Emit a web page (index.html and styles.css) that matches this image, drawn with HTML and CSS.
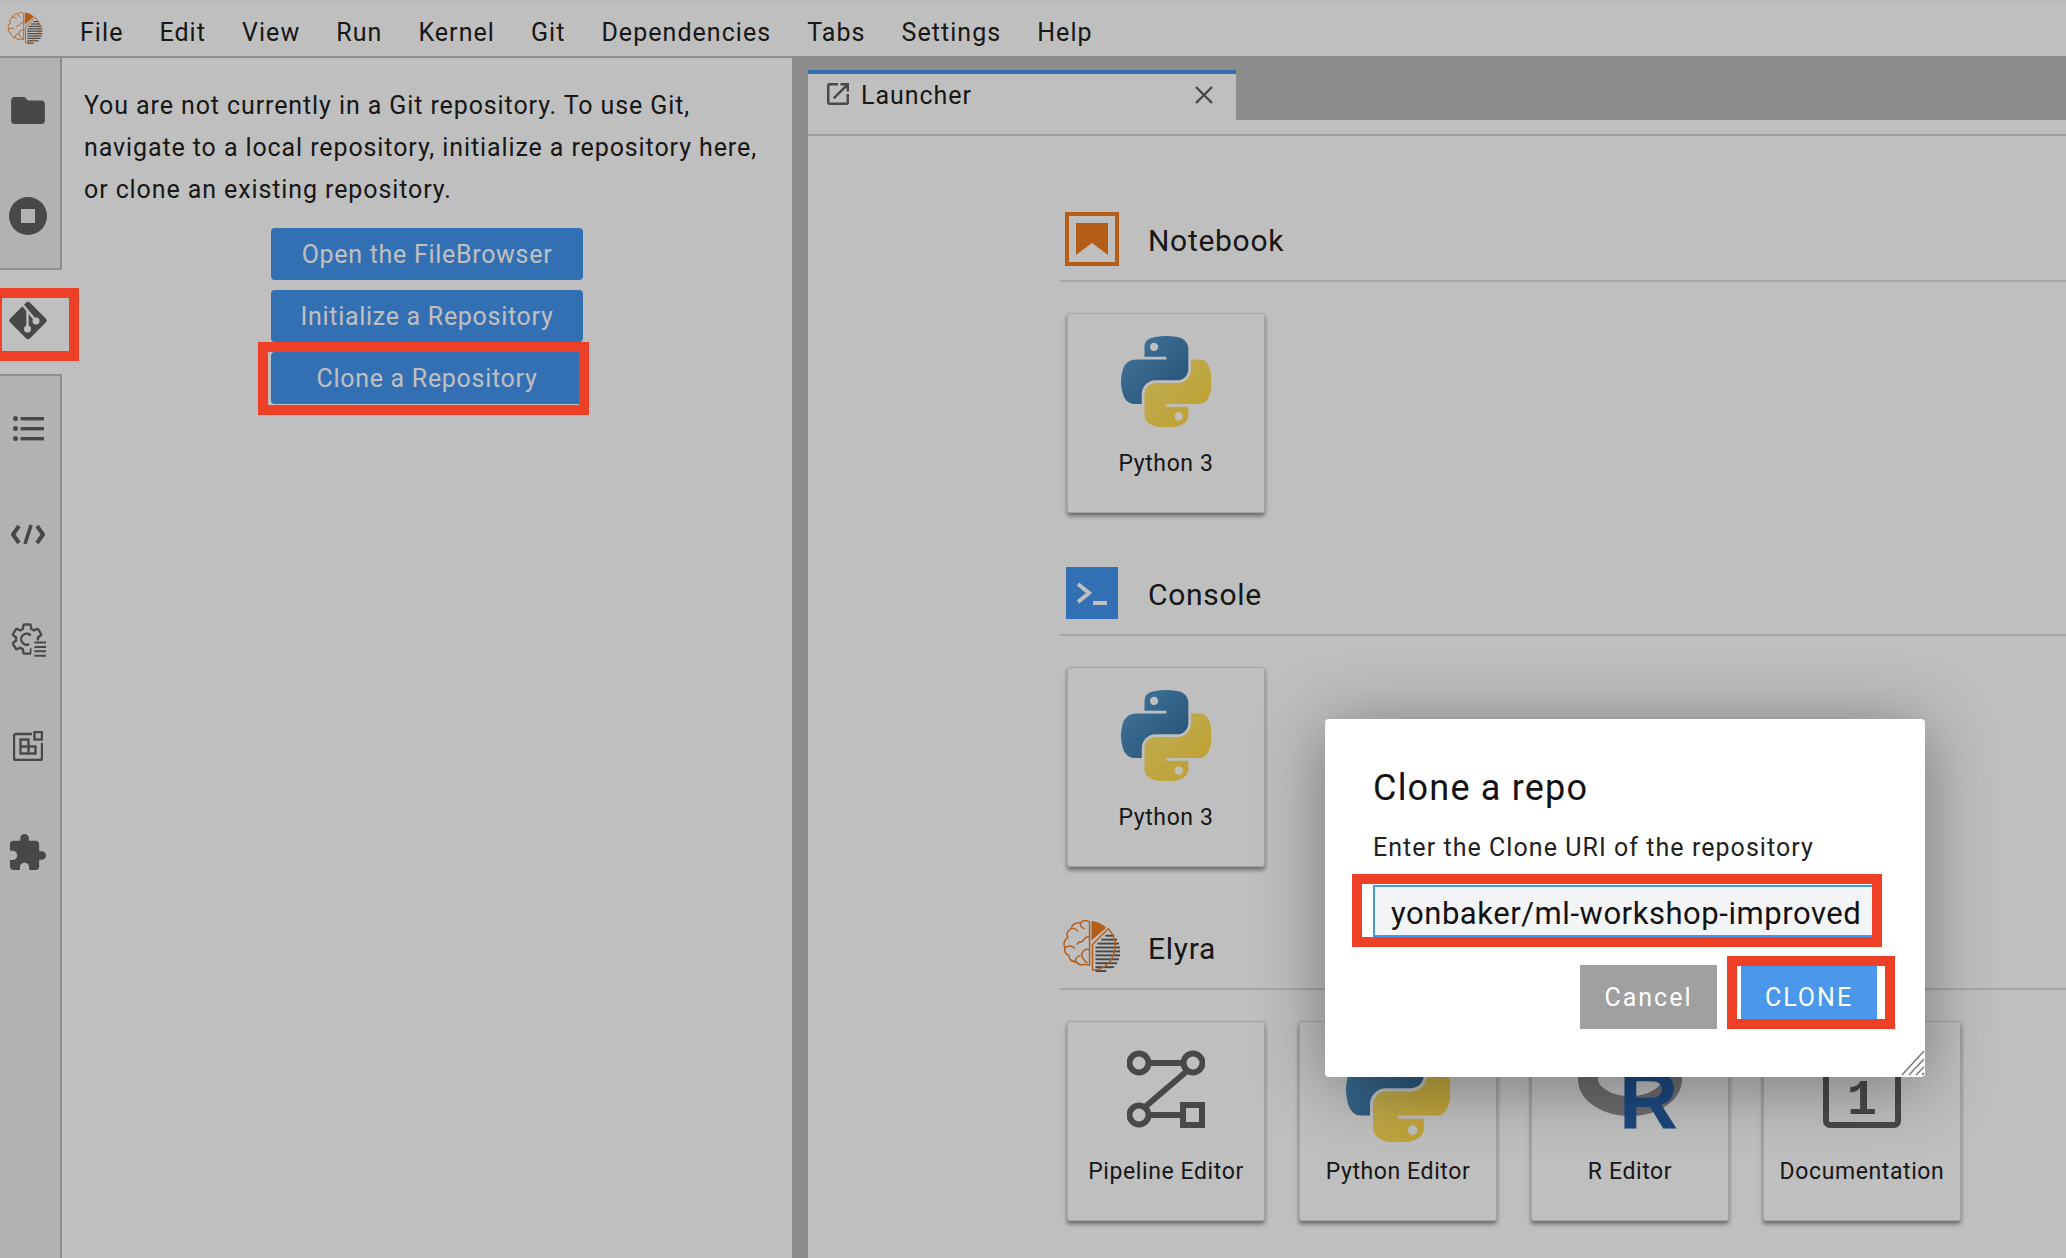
FILE: index.html
```html
<!DOCTYPE html>
<html lang="en">
<head>
  <meta charset="UTF-8">
  <title>JupyterLab - Clone a repo</title>
  <link rel="stylesheet" href="styles.css">
</head>
<body>

<svg class="defs" aria-hidden="true">
  <defs>
    <linearGradient id="pyBlue" x1="0" y1="0" x2="1" y2="1">
      <stop offset="0" stop-color="#5a9fd4"/>
      <stop offset="1" stop-color="#306998"/>
    </linearGradient>
    <linearGradient id="pyYellow" x1="1" y1="1" x2="0" y2="0">
      <stop offset="0" stop-color="#ffd43b"/>
      <stop offset="1" stop-color="#ffe873"/>
    </linearGradient>
    <symbol id="python" viewBox="0 0 110 110">
      <path fill="url(#pyBlue)" d="M54.919 0.001c-4.584.022-8.961.413-12.813 1.095C30.76 3.099 28.7 7.295 28.7 15.032v10.219h26.813v3.406H18.638c-7.793 0-14.616 4.684-16.75 13.594-2.462 10.213-2.571 16.586 0 27.25 1.906 7.938 6.458 13.594 14.25 13.594h9.219v-12.25c0-8.85 7.657-16.656 16.75-16.656h26.781c7.455 0 13.406-6.138 13.406-13.625V15.032c0-7.266-6.13-12.725-13.406-13.937C64.282.328 59.502-.02 54.919.001zM40.419 8.22c2.77 0 5.031 2.299 5.031 5.125 0 2.816-2.262 5.094-5.031 5.094-2.779 0-5.031-2.277-5.031-5.094 0-2.826 2.252-5.125 5.031-5.125z"/>
      <path fill="url(#pyYellow)" d="M85.638 28.657v11.906c0 9.231-7.826 17-16.75 17H42.106c-7.336 0-13.406 6.278-13.406 13.625v25.531c0 7.266 6.319 11.54 13.406 13.625 8.487 2.496 16.626 2.947 26.781 0 6.75-1.954 13.406-5.888 13.406-13.625V86.501H55.513v-3.406h40.188c7.793 0 10.696-5.436 13.406-13.594 2.8-8.399 2.68-16.476 0-27.25-1.926-7.757-5.604-13.594-13.406-13.594H85.638zM70.575 93.313c2.779 0 5.031 2.277 5.031 5.094 0 2.826-2.252 5.125-5.031 5.125-2.77 0-5.031-2.299-5.031-5.125 0-2.816 2.262-5.094 5.031-5.094z"/>
    </symbol>
    <symbol id="elyra" viewBox="0 0 60 55">
      <g fill="#616161">
        <rect x="43" y="15" width="9" height="2"/>
        <rect x="39" y="19" width="16" height="2"/>
        <rect x="35" y="23" width="22" height="2"/>
        <rect x="33" y="27" width="25" height="2"/>
        <rect x="33" y="31" width="25" height="2"/>
        <rect x="33" y="35" width="25" height="2"/>
        <rect x="33" y="39" width="24" height="2"/>
        <rect x="33" y="43" width="22" height="2"/>
        <rect x="33" y="47" width="19" height="2"/>
        <rect x="33" y="51" width="11" height="2"/>
      </g>
      <path fill="#ef7d22" d="M29 1c6 .3 11 3 15 7L29 21z"/>
      <g fill="none" stroke="#ef7d22" stroke-width="1.5" stroke-linejoin="round">
        <path d="M46 9L30 25v26c13 0 23-11 23-25 0-7-3-13-7-17z"/>
        <path d="M27 2c-3-2-7-2-9 1-4-1-9 1-10 6-4 2-5 6-3 9-4 2-5 7-3 10-1 3 0 7 4 8 0 4 3 7 7 6 2 3 6 5 9 3 2 1 3 1 5 1V2z"/>
        <path d="M18 3c-1 3 1 5 4 6M8 9c3-1 6 0 7 3M27 17c-4 0-6 2-7 5M2 28c4-2 8-2 10 1M20 22c-3 0-5 1-6 3M12 44c0-4 2-7 6-8M27 30c-5-1-8 2-8 6M19 36c1 4 3 6 6 8"/>
      </g>
    </symbol>
  </defs>
</svg>

<div class="menu-bar">
  <svg class="menu-logo"><use href="#elyra"/></svg>
  <div class="menu-items">
    <span>File</span>
    <span>Edit</span>
    <span>View</span>
    <span>Run</span>
    <span>Kernel</span>
    <span>Git</span>
    <span>Dependencies</span>
    <span>Tabs</span>
    <span>Settings</span>
    <span>Help</span>
  </div>
</div>

<div class="shell">
  <div class="side-bar">
    <div class="side-group side-group-top">
      <div class="side-tab">
        <svg class="side-icon" viewBox="2 4 20 16" width="34" height="27"><path d="M10 4H4c-1.1 0-1.99.9-1.99 2L2 18c0 1.1.9 2 2 2h16c1.1 0 2-.9 2-2V8c0-1.1-.9-2-2-2h-8l-2-2z"/></svg>
      </div>
      <div class="side-tab">
        <svg class="side-icon" viewBox="0 0 38 38" width="38" height="38"><path fill-rule="evenodd" d="M19 0a19 19 0 100 38 19 19 0 000-38zM12 12h14v14H12z"/></svg>
      </div>
    </div>
    <div class="side-tab side-tab-current">
      <svg viewBox="0 0 40 41" width="40" height="41">
        <rect class="git-body" x="6" y="6.5" width="28" height="28" rx="3" transform="rotate(45 20 20.5)"/>
        <path class="git-line" d="M14 4l14 17M19.500 11v18"/>
        <circle class="git-dot" cx="19.500" cy="29" r="3.500"/>
        <circle class="git-dot" cx="28" cy="21" r="3.500"/>
      </svg>
    </div>
    <div class="side-group side-group-bottom">
      <div class="side-tab">
        <svg class="side-icon" viewBox="0 0 31 25" width="31" height="25">
          <circle cx="2.5" cy="2.5" r="2.5"/><rect x="7.5" y="1" width="23.5" height="3.4"/>
          <circle cx="2.5" cy="12.5" r="2.5"/><rect x="7.5" y="11" width="23.5" height="3.4"/>
          <circle cx="2.5" cy="22.5" r="2.5"/><rect x="7.5" y="21" width="23.5" height="3.4"/>
        </svg>
      </div>
      <div class="side-tab">
        <svg class="side-stroke" viewBox="0 0 34 21" width="34" height="21">
          <path d="M8 2L2 10.5 8 19M26 2l6 8.5L26 19"/>
          <path d="M20 1l-6 19" stroke-width="3.6"/>
        </svg>
      </div>
      <div class="side-tab">
        <svg viewBox="1 1 24 24" width="35" height="35">
          <path class="gear" d="M19.43 12.98c.04-.32.07-.64.07-.98s-.03-.66-.07-.98l2.11-1.65c.19-.15.24-.42.12-.64l-2-3.46c-.12-.22-.39-.3-.61-.22l-2.49 1c-.52-.4-1.08-.73-1.69-.98l-.38-2.65C14.46 2.18 14.25 2 14 2h-4c-.25 0-.46.18-.49.42l-.38 2.65c-.61.25-1.17.59-1.69.98l-2.49-1c-.23-.09-.49 0-.61.22l-2 3.46c-.13.22-.07.49.12.64l2.11 1.65c-.04.32-.07.65-.07.98s.03.66.07.98l-2.11 1.65c-.19.15-.24.42-.12.64l2 3.46c.12.22.39.3.61.22l2.49-1c.52.4 1.08.73 1.69.98l.38 2.65c.03.24.24.42.49.42h4c.25 0 .46-.18.49-.42l.38-2.65c.61-.25 1.17-.59 1.69-.98z"/>
          <path class="gear" d="M14.5 9.5a3.8 3.8 0 10-1 6"/>
          <rect class="gear-gap" x="15" y="13" width="12" height="12"/>
          <path class="gear-list" d="M17 15h8M17 18h8M17 21h8M17 24h8" transform="translate(0 -.6)"/>
        </svg>
      </div>
      <div class="side-tab">
        <svg class="side-stroke side-thin" viewBox="0 0 30 30" width="30" height="30">
          <path d="M19 3H3a2 2 0 00-2 2v22a2 2 0 002 2h24a2 2 0 002-2V12"/>
          <rect x="21.5" y="1" width="7.5" height="7.5"/>
          <path d="M7.5 8.5h8v14h-8zM7.5 15.500h15v7h-7"/>
        </svg>
      </div>
      <div class="side-tab">
        <svg class="side-icon" viewBox="2 1 21 21" width="36" height="36"><path d="M20.5 11H19V7c0-1.1-.9-2-2-2h-4V3.5C13 2.12 11.88 1 10.5 1S8 2.12 8 3.5V5H4c-1.1 0-1.99.9-1.99 2v3.8H3.5c1.49 0 2.7 1.21 2.7 2.7s-1.21 2.7-2.7 2.7H2V20c0 1.1.9 2 2 2h3.8v-1.5c0-1.49 1.21-2.7 2.7-2.7 1.49 0 2.7 1.21 2.7 2.7V22H17c1.1 0 2-.9 2-2v-4h1.5c1.38 0 2.5-1.12 2.5-2.5S21.88 11 20.5 11z"/></svg>
      </div>
    </div>
  </div>

  <div class="git-panel">
    <p class="git-text">You are not currently in a Git repository. To use Git, navigate to a local repository, initialize a repository here, or clone an existing repository.</p>
    <div class="git-actions">
      <button class="git-btn">Open the FileBrowser</button>
      <button class="git-btn">Initialize a Repository</button>
      <button class="git-btn">Clone a Repository</button>
    </div>
  </div>

  <div class="work-area">
    <div class="tab-bar">
      <div class="tab">
        <svg class="tab-icon" viewBox="3 3 18 18" width="22" height="22"><path d="M19 19H5V5h7V3H5a2 2 0 00-2 2v14a2 2 0 002 2h14c1.1 0 2-.9 2-2v-7h-2v7zM14 3v2h3.59l-9.83 9.83 1.41 1.41L19 6.41V10h2V3h-7z"/></svg>
        <span class="tab-label">Launcher</span>
        <svg class="tab-close" viewBox="0 0 18 18" width="18" height="18"><path d="M1 1l16 16M17 1L1 17"/></svg>
      </div>
    </div>
    <div class="tab-strip"></div>

    <div class="launcher">
      <section class="section">
        <div class="section-head">
          <div class="section-icon">
            <svg viewBox="0 0 54 54" width="54" height="54">
              <rect class="nb-frame" x="2" y="2" width="50" height="50"/>
              <path class="nb-mark" d="M11 11h32v32L27 31 11 43z"/>
            </svg>
          </div>
          <h3 class="section-title">Notebook</h3>
        </div>
        <div class="cards">
          <div class="card">
            <div class="card-icon"><svg width="90" height="92"><use href="#python"/></svg></div>
            <div class="card-label">Python 3</div>
          </div>
        </div>
      </section>

      <section class="section">
        <div class="section-head">
          <div class="section-icon">
            <svg class="console-icon" viewBox="0 0 52 52" width="52" height="52">
              <rect class="con-bg" width="52" height="52"/>
              <path class="con-mark" d="M12 17l11 9-11 9M27 36h14"/>
            </svg>
          </div>
          <h3 class="section-title">Console</h3>
        </div>
        <div class="cards">
          <div class="card">
            <div class="card-icon"><svg width="90" height="92"><use href="#python"/></svg></div>
            <div class="card-label">Python 3</div>
          </div>
        </div>
      </section>

      <section class="section">
        <div class="section-head">
          <div class="section-icon"><svg class="elyra-icon"><use href="#elyra"/></svg></div>
          <h3 class="section-title">Elyra</h3>
        </div>
        <div class="cards">
          <div class="card">
            <div class="card-icon">
              <svg class="pipe-icon" viewBox="0 0 78 78" width="78" height="78">
                <circle cx="12" cy="13" r="9.5"/>
                <circle cx="66" cy="13" r="9.5"/>
                <circle cx="12" cy="65" r="9.5"/>
                <rect x="56" y="55" width="19" height="20"/>
                <path d="M21.500 13h35M60 21L18 57M21.500 65H56"/>
              </svg>
            </div>
            <div class="card-label">Pipeline Editor</div>
          </div>
          <div class="card">
            <div class="card-icon"><svg width="104" height="106"><use href="#python"/></svg></div>
            <div class="card-label">Python Editor</div>
          </div>
          <div class="card">
            <div class="card-icon">
              <svg viewBox="0 0 104 80" width="104" height="80">
                <ellipse class="r-ring" cx="52" cy="30" rx="42" ry="27"/>
                <text class="r-letter" x="41" y="79">R</text>
              </svg>
            </div>
            <div class="card-label">R Editor</div>
          </div>
          <div class="card">
            <div class="card-icon">
              <svg viewBox="0 0 78 78" width="78" height="78">
                <rect class="doc-frame" x="3" y="3" width="72" height="72" rx="4"/>
                <text class="doc-num" x="39" y="64">1</text>
              </svg>
            </div>
            <div class="card-label">Documentation</div>
          </div>
        </div>
      </section>
    </div>
  </div>
</div>

<div class="backdrop">
  <div class="dialog">
    <h2 class="dialog-title">Clone a repo</h2>
    <div class="dialog-label">Enter the Clone URI of the repository</div>
    <input class="dialog-input" value="yonbaker/ml-workshop-improved">
    <div class="dialog-actions">
      <button class="dialog-btn dialog-cancel">Cancel</button>
      <button class="dialog-btn dialog-accept">CLONE</button>
    </div>
    <svg class="dialog-grip" viewBox="0 0 24 26" width="24" height="26"><path d="M1 25L23 1M8 25L23 9M15 25l8-8M21 25l2-2"/></svg>
  </div>
</div>

<div class="mark mark-git"></div>
<div class="mark mark-btn"></div>
<div class="mark mark-input"></div>
<div class="mark mark-clone"></div>

</body>
</html>
```

FILE: styles.css
```css
* {
  box-sizing: border-box;
}
html, body {
  margin: 0;
  height: 100%;
}
body {
  width: 2066px;
  height: 1258px;
  overflow: hidden;
  position: relative;
  background: #fff;
  color: #212121;
  font-family: Roboto, sans-serif;
  font-size: 25px;
  letter-spacing: 0.9px;
}
button {
  font-family: inherit;
  border: none;
}
.defs {
  position: absolute;
  width: 0;
  height: 0;
}

/* top menu */
.menu-bar {
  height: 58px;
  padding: 2px 0 0 7px;
  display: flex;
  align-items: center;
  background: #fff;
  border-top: 2px solid #f8f8f8;
  border-bottom: 2px solid #bdbdbd;
}
.menu-logo {
  width: 37px;
  height: 33px;
  margin-top: -4px;
}
.menu-items {
  display: flex;
  gap: 36px;
  margin-left: 36px;
  margin-top: 4px;
  letter-spacing: 1.05px;
}

.shell {
  display: flex;
  height: 1200px;
}

/* left icon bar */
.side-bar {
  width: 62px;
  flex: none;
  display: flex;
  flex-direction: column;
}
.side-group {
  background: #eee;
  border-right: 2px solid #bdbdbd;
}
.side-group-top {
  border-bottom: 2px solid #bdbdbd;
  height: 212px;
}
.side-group-bottom {
  border-top: 2px solid #bdbdbd;
  flex: 1;
}
.side-tab {
  height: 106px;
  display: flex;
  align-items: center;
  justify-content: center;
  padding: 0 4px 2px 0;
}
.side-tab-current {
  height: 104px;
  padding: 0 6px 3px 0;
}
.side-icon {
  fill: #616161;
}
.side-stroke {
  fill: none;
  stroke: #616161;
  stroke-width: 4;
}
.side-thin {
  stroke-width: 2.4;
}
.git-body {
  fill: #616161;
}
.git-line {
  fill: none;
  stroke: #fff;
  stroke-width: 2.4;
}
.git-dot {
  fill: #fff;
}
.gear {
  fill: none;
  stroke: #616161;
  stroke-width: 1.6;
}
.gear-gap {
  fill: #eee;
}
.gear-list {
  fill: none;
  stroke: #616161;
  stroke-width: 1.4;
}

/* git panel */
.git-panel {
  width: 730px;
  flex: none;
  padding: 27px 20px 0 22px;
}
.git-text {
  margin: 0;
  line-height: 42px;
}
.git-actions {
  width: 312px;
  margin: 17px 0 0 187px;
  display: flex;
  flex-direction: column;
  gap: 10px;
}
.git-btn {
  height: 52px;
  background: #4595ef;
  color: #fff;
  border-radius: 4px;
  font-size: 25px;
  letter-spacing: 0.7px;
}

/* main work area */
.work-area {
  flex: 1;
  min-width: 0;
  border-left: 16px solid #bdbdbd;
}
.tab-bar {
  height: 62px;
  background: #bdbdbd;
  display: flex;
  align-items: flex-end;
}
.tab {
  width: 428px;
  height: 50px;
  background: #fff;
  border-top: 4px solid #4595ef;
  display: flex;
  align-items: flex-start;
  padding: 9px 0 0 19px;
}
.tab-icon {
  fill: #616161;
}
.tab-label {
  margin-left: 12px;
  margin-top: 1px;
  line-height: 24px;
  letter-spacing: 0.95px;
}
.tab-close {
  margin: 3px 23px 0 auto;
  fill: none;
  stroke: #616161;
  stroke-width: 2.4;
}
.tab-strip {
  height: 16px;
  border-bottom: 2px solid #d4d4d4;
}

.launcher {
  padding: 76px 0 0 252px;
}
.section {
  margin-bottom: 53px;
}
.section-head {
  display: flex;
  align-items: center;
  padding-bottom: 14px;
  border-bottom: 2px solid #dedede;
}
.section-icon {
  width: 88px;
  height: 54px;
  padding-left: 5px;
  display: flex;
  align-items: center;
}
.section-title {
  margin: 2px 0 0;
  font-size: 30px;
  font-weight: 400;
  letter-spacing: 0.7px;
}
.console-icon {
  margin-left: 1px;
}
.elyra-icon {
  width: 59px;
  height: 54px;
  margin-left: -2px;
}
.nb-frame {
  fill: none;
  stroke: #ef7d22;
  stroke-width: 4;
}
.nb-mark {
  fill: #ef7d22;
}
.con-bg {
  fill: #4595ef;
}
.con-mark {
  fill: none;
  stroke: #fff;
  stroke-width: 4;
}
.cards {
  display: flex;
  gap: 34px;
  margin: 31px 0 0 7px;
}
.card {
  width: 198px;
  height: 200px;
  padding-top: 21px;
  background: #fff;
  border-radius: 3px;
  border: 1px solid #ddd;
  box-shadow: 0 3px 4px rgba(0,0,0,0.45);
  display: flex;
  flex-direction: column;
  align-items: center;
}
.card-icon {
  height: 92px;
  flex: none;
  display: flex;
  align-items: center;
  justify-content: center;
}
.card-icon svg {
  flex: none;
}
.card-label {
  margin-top: 22px;
  line-height: 30px;
  font-size: 23px;
  letter-spacing: 0.6px;
  white-space: nowrap;
}
.pipe-icon {
  fill: none;
  stroke: #616161;
  stroke-width: 6;
}
.r-ring {
  fill: none;
  stroke: #909096;
  stroke-width: 20;
}
.r-letter {
  font-family: "Liberation Sans", sans-serif;
  font-weight: 700;
  font-size: 82px;
  fill: #2660a8;
  letter-spacing: 0;
}
.doc-frame {
  fill: #fff;
  stroke: #616161;
  stroke-width: 6;
}
.doc-num {
  font-family: "Liberation Mono", monospace;
  font-weight: 700;
  font-size: 50px;
  fill: #616161;
  text-anchor: middle;
  letter-spacing: 0;
}

/* modal */
.backdrop {
  position: absolute;
  inset: 0;
  background: rgba(0,0,0,0.25);
}
.dialog {
  position: absolute;
  left: 1325px;
  top: 719px;
  width: 600px;
  height: 358px;
  padding: 47px 48px 0 48px;
  background: #fff;
  border-radius: 4px;
  box-shadow: 0 8px 70px rgba(0,0,0,0.38);
}
.dialog-title {
  margin: 0;
  font-size: 36px;
  line-height: 44px;
  font-weight: 400;
  color: #111;
  letter-spacing: 1.2px;
}
.dialog-label {
  margin-top: 23px;
  line-height: 30px;
  letter-spacing: 1.05px;
}
.dialog-input {
  display: block;
  width: 100%;
  height: 52px;
  margin-top: 22px;
  padding: 4px 0 0 16px;
  background: #f3f4f5;
  border: 2px solid #4595ef;
  outline: none;
  font-family: inherit;
  font-size: 31px;
  letter-spacing: 0.55px;
  color: #111;
}
.dialog-actions {
  display: flex;
  justify-content: flex-end;
  gap: 24px;
  margin-top: 28px;
}
.dialog-btn {
  height: 64px;
  color: #fff;
  font-size: 25px;
  letter-spacing: 2px;
}
.dialog-cancel {
  width: 137px;
  background: #a0a0a0;
}
.dialog-accept {
  width: 136px;
  background: #4a97eb;
}
.dialog-grip {
  position: absolute;
  right: 0;
  bottom: 1px;
  fill: none;
  stroke: #757575;
  stroke-width: 1.4;
}

/* red annotation frames */
.mark {
  position: absolute;
  height: 73px;
  border: 10px solid #ee4026;
}
.mark-git {
  left: 0;
  top: 288px;
  width: 79px;
  border-left-width: 2px;
}
.mark-btn {
  left: 258px;
  top: 342px;
  width: 331px;
}
.mark-input {
  left: 1352px;
  top: 874px;
  width: 530px;
}
.mark-clone {
  left: 1727px;
  top: 956px;
  width: 168px;
}
```
